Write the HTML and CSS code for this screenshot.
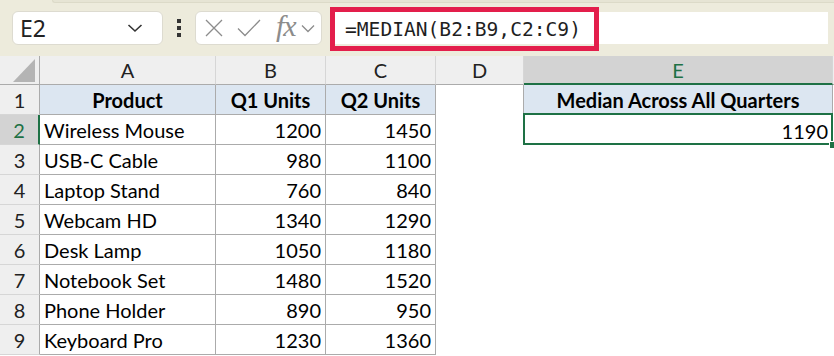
FILE: index.html
```html
<!DOCTYPE html>
<html lang="en">
<head>
    <meta charset="UTF-8">
    <title>MEDIAN</title>
    <link rel="stylesheet" href="styles.css">
</head>
<body>
    <div class="bar">
        <div class="ribbon-edge"></div>
        <div class="bar-row">
            <div class="namebox">
                <span class="cellref">E2</span>
                <svg class="chev" width="16" height="10" viewBox="0 0 16 10"><path d="M1.5 2 L8 8 L14.5 2" fill="none" stroke="#333" stroke-width="1.6"/></svg>
            </div>
            <div class="dots"><span></span><span></span><span></span></div>
            <div class="fnbox">
                <svg width="18" height="18" viewBox="0 0 18 18"><path d="M1 1 L17 17 M17 1 L1 17" stroke="#8c8c8c" stroke-width="1.3"/></svg>
                <svg width="24" height="18" viewBox="0 0 24 18"><path d="M1 9.5 L8 16.5 L23 1" fill="none" stroke="#8c8c8c" stroke-width="1.3"/></svg>
                <span class="fx">fx</span>
                <svg width="14" height="9" viewBox="0 0 14 9"><path d="M1 1.5 L7 7.5 L13 1.5" fill="none" stroke="#8c8c8c" stroke-width="1.3"/></svg>
            </div>
            <div class="formula">
                <span class="hl">=MEDIAN(B2:B9,C2:C9)</span>
            </div>
        </div>
    </div>

    <div class="sheet">
        <div class="ch corner"><svg width="22" height="23" viewBox="0 0 22 23"><path d="M0 23 L22 0 L22 23 Z" fill="#b4b4b4"/></svg></div>
        <div class="ch">A</div>
        <div class="ch">B</div>
        <div class="ch">C</div>
        <div class="ch">D</div>
        <div class="ch ch-sel">E</div>
        <div class="ch last"></div>

        <div class="rh">1</div>
        <div class="c head">Product</div>
        <div class="c head">Q1 Units</div>
        <div class="c head">Q2 Units</div>
        <div class="c blank edge"></div>
        <div class="c head boxed">Median Across All Quarters</div>
        <div class="c blank"></div>

        <div class="rh rh-sel">2</div>
        <div class="c">Wireless Mouse</div>
        <div class="c num">1200</div>
        <div class="c num">1450</div>
        <div class="c blank"></div>
        <div class="c num sel">1190</div>
        <div class="c blank"></div>

        <div class="rh">3</div>
        <div class="c">USB-C Cable</div>
        <div class="c num">980</div>
        <div class="c num">1100</div>
        <div class="c blank"></div>
        <div class="c blank"></div>
        <div class="c blank"></div>

        <div class="rh">4</div>
        <div class="c">Laptop Stand</div>
        <div class="c num">760</div>
        <div class="c num">840</div>
        <div class="c blank"></div>
        <div class="c blank"></div>
        <div class="c blank"></div>

        <div class="rh">5</div>
        <div class="c">Webcam HD</div>
        <div class="c num">1340</div>
        <div class="c num">1290</div>
        <div class="c blank"></div>
        <div class="c blank"></div>
        <div class="c blank"></div>

        <div class="rh">6</div>
        <div class="c">Desk Lamp</div>
        <div class="c num">1050</div>
        <div class="c num">1180</div>
        <div class="c blank"></div>
        <div class="c blank"></div>
        <div class="c blank"></div>

        <div class="rh">7</div>
        <div class="c">Notebook Set</div>
        <div class="c num">1480</div>
        <div class="c num">1520</div>
        <div class="c blank"></div>
        <div class="c blank"></div>
        <div class="c blank"></div>

        <div class="rh">8</div>
        <div class="c">Phone Holder</div>
        <div class="c num">890</div>
        <div class="c num">950</div>
        <div class="c blank"></div>
        <div class="c blank"></div>
        <div class="c blank"></div>

        <div class="rh">9</div>
        <div class="c">Keyboard Pro</div>
        <div class="c num">1230</div>
        <div class="c num">1360</div>
        <div class="c blank"></div>
        <div class="c blank"></div>
        <div class="c blank"></div>
    </div>
</body>
</html>
```

FILE: styles.css
```css
body {
    margin: 0;
    width: 834px;
    height: 356px;
    overflow: hidden;
    background-color: #ffffff;
    font-family: Lato, "Liberation Sans", sans-serif;
}

/* formula bar */
.bar {
    height: 56px;
    background-color: #edebdc;
    box-sizing: border-box;
}
.ribbon-edge {
    height: 2px;
    margin-left: 52px;
    border-bottom: 1px solid #dcdac8;
    border-left: 1px solid #dcdac8;
    border-bottom-left-radius: 4px;
    background-color: #e6e4d4;
}
.bar-row {
    display: flex;
    align-items: flex-start;
    padding-top: 8px;
    padding-left: 12px;
}
.namebox {
    width: 151px;
    height: 34px;
    box-sizing: border-box;
    background-color: #fff;
    border: 1px solid #dddbd0;
    border-radius: 6px;
    display: flex;
    align-items: center;
    justify-content: space-between;
    padding: 0 19px 0 7px;
}
.cellref {
    font-family: "Noto Sans", "Open Sans", sans-serif;
    font-size: 23px;
    line-height: 1;
    color: #222;
}
.dots {
    width: 32px;
    height: 34px;
    display: flex;
    flex-direction: column;
    align-items: center;
    justify-content: center;
    gap: 3px;
}
.dots span {
    width: 4px;
    height: 4px;
    background-color: #333;
}
.fnbox {
    width: 127px;
    height: 34px;
    box-sizing: border-box;
    background-color: #fff;
    border: 1px solid #dddbd0;
    border-radius: 6px;
    display: flex;
    align-items: center;
    padding-left: 9px;
}
.fnbox svg:nth-child(2) {
    margin-left: 14px;
}
.fx {
    font-family: "Liberation Serif", "DejaVu Serif", serif;
    font-style: italic;
    font-size: 30px;
    line-height: 1;
    color: #8c8c8c;
    margin-left: 15px;
    margin-right: 5px;
    margin-top: -4px;
    letter-spacing: -1px;
}
.formula {
    flex: 1;
    height: 32px;
    margin-left: 8px;
    margin-right: 6px;
    margin-top: 1px;
    background-color: #fff;
    display: flex;
    align-items: flex-start;
}
.hl {
    width: 269px;
    height: 44px;
    box-sizing: border-box;
    margin-top: -5px;
    border: 5px solid #e31e4b;
    padding-left: 10px;
    display: flex;
    align-items: center;
    font-family: "DejaVu Sans Mono", "Liberation Mono", monospace;
    font-size: 19.6px;
    color: #1f1f1f;
    white-space: nowrap;
}

/* grid */
.sheet {
    display: grid;
    grid-template-columns: 40px 176px 110px 110px 88px 309px 1fr;
    grid-template-rows: 29px repeat(9, 30px);
    font-size: 20px;
}
.ch {
    background-color: #efefef;
    border-right: 1px solid #d6d6d6;
    border-bottom: 1px solid #ababab;
    display: flex;
    align-items: center;
    justify-content: center;
    color: #222;
    box-sizing: border-box;
}
.corner {
    align-items: flex-end;
    justify-content: flex-end;
    padding: 0 4px 2px 0;
    border-right-color: #ababab;
}
.ch-sel {
    background-color: #d3d3d3;
    color: #1e7145;
    border-bottom: 2px solid #1e7145;
}
.ch.last {
    border-right: none;
}
.rh {
    background-color: #efefef;
    border-right: 1px solid #ababab;
    border-bottom: 1px solid #d6d6d6;
    display: flex;
    align-items: center;
    justify-content: center;
    color: #222;
    box-sizing: border-box;
}
.rh-sel {
    background-color: #d3d3d3;
    color: #1e7145;
    border-right: 2px solid #1e7145;
}
.c {
    border-right: 1px solid #ababab;
    border-bottom: 1px solid #ababab;
    box-sizing: border-box;
    display: flex;
    align-items: center;
    padding: 1px 4px 0 4px;
    color: #000;
    white-space: nowrap;
}
.head {
    background-color: #dce6f1;
    font-weight: bold;
    justify-content: center;
}
.num {
    justify-content: flex-end;
}
.blank {
    border: none;
}
.blank.edge {
    border-right: 1px solid #ababab;
}
.boxed {
    border-right: 1px solid #ababab;
}
.sel {
    position: relative;
    border: none;
    padding-right: 5px;
}
.sel::after {
    content: "";
    position: absolute;
    top: -2px;
    left: -1px;
    right: 0;
    bottom: 0;
    border: 2px solid #1e7145;
}
.sel::before {
    content: "";
    position: absolute;
    right: -3px;
    bottom: -3px;
    width: 6px;
    height: 6px;
    background-color: #1e7145;
    border-left: 1px solid #fff;
    border-top: 1px solid #fff;
    z-index: 1;
}
```
